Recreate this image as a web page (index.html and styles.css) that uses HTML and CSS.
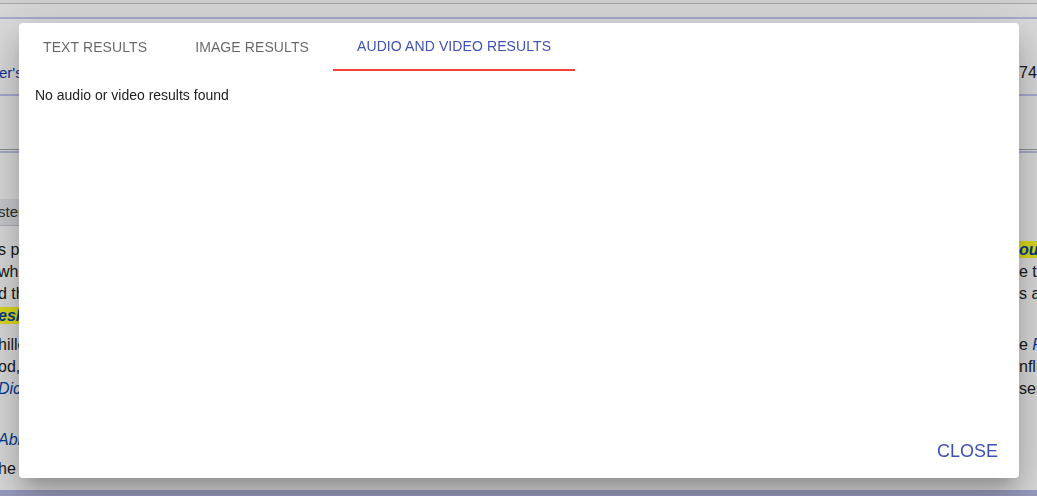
FILE: index.html
```html
<!DOCTYPE html>
<html>
<head>
<meta charset="utf-8">
<link rel="stylesheet" href="styles.css">
</head>
<body>
<div class="page">
  <div class="topstrip"></div>
  <div class="header"></div>
  <div class="row row-title"><span class="left link">er's Digest</span><span class="right">749</span></div>
  <div class="rule-blue rule-a"></div>
  <div class="spacer-a"></div>
  <div class="rule-gray"></div>
  <div class="rule-blue rule-b"></div>
  <div class="spacer-b"></div>
  <div class="greybox">ster</div>
  <div class="para para-a">
    <div class="row"><span class="left">s pr</span><span class="right"><span class="hl">ourn</span></span></div>
    <div class="row"><span class="left">whic</span><span class="right">e the</span></div>
    <div class="row"><span class="left">d th</span><span class="right">s at t</span></div>
    <div class="row"><span class="left"><span class="hl">esh</span></span><span class="right"></span></div>
  </div>
  <div class="para para-b">
    <div class="row"><span class="left">hille</span><span class="right">e <i class="link">Ret</i></span></div>
    <div class="row"><span class="left">od,</span><span class="right">nflu</span></div>
    <div class="row"><span class="left"> <i class="link">Dic</i></span><span class="right">ses</span></div>
  </div>
  <div class="para para-c">
    <div class="row"><span class="left"><i class="link">Abl</i></span><span class="right"></span></div>
  </div>
  <div class="para para-d">
    <div class="row"><span class="left">he y</span><span class="right"></span></div>
  </div>
  <div class="footbar"></div>
</div>
<div class="overlay"></div>
<div class="dialog">
  <div class="tabs">
    <div class="tab">Text results</div>
    <div class="tab">Image results</div>
    <div class="tab tab-active">Audio and video results</div>
  </div>
  <div class="content">No audio or video results found</div>
  <div class="actions">
    <button class="btn">CLOSE</button>
  </div>
</div>
</body>
</html>
```

FILE: styles.css
```css
html, body {
  margin: 0;
  padding: 0;
  height: 100%;
  overflow: hidden;
}
body {
  font-family: "Liberation Sans", Arial, sans-serif;
  font-size: 16px;
  color: #202122;
  background: #fff;
}
.page {
  display: flex;
  flex-direction: column;
  height: 496px;
}
.topstrip {
  height: 3px;
  background: #f4f4f4;
  border-bottom: 1px solid #c4c4c4;
}
.header {
  height: 13px;
  background: #fcfcfc;
  border-bottom: 2px solid #c4c8f0;
}
.row {
  display: flex;
  justify-content: space-between;
  height: 22px;
  line-height: 22px;
  white-space: nowrap;
  margin-right: -42px;
}
.left {
  flex: none;
  width: 60px;
  margin-left: -2px;
  text-align: left;
}
.right {
  flex: none;
  width: 60px;
  overflow: hidden;
}
.row-title {
  margin-top: 42px;
  height: 24px;
  line-height: 24px;
}
.row-title .left {
  font-size: 15px;
  margin-left: -1px;
}
.link {
  color: #0645ad;
}
.rule-a {
  margin-top: 9px;
}
.rule-blue {
  height: 2px;
  background: #c4c8f0;
}
.spacer-a {
  height: 53px;
}
.rule-gray {
  height: 1px;
  background: #a2a9b1;
}
.rule-b {
  margin-top: 1px;
}
.spacer-b {
  height: 46px;
}
.greybox {
  height: 26px;
  line-height: 26px;
  width: 60px;
  margin-left: -2px;
  background: #eaecf0;
  color: #333;
  font-size: 15px;
  border-bottom: 1px solid #c8ccd1;
}
.para-a {
  margin-top: 13px;
}
.para-b {
  margin-top: 7px;
}
.para-c {
  margin-top: 29px;
}
.para-d {
  margin-top: 7px;
}
.hl {
  background: #ffff22;
  font-weight: bold;
  font-style: italic;
  color: #0645ad;
}
.footbar {
  margin-top: auto;
  height: 6px;
  background: #b4b8e0;
}
.overlay {
  position: fixed;
  inset: 0;
  background: rgba(0, 0, 0, 0.15);
}
.dialog {
  position: fixed;
  left: 19px;
  top: 23px;
  width: 1000px;
  height: 455px;
  background: #fff;
  border-radius: 4px;
  box-shadow: 0 11px 15px -7px rgba(0,0,0,0.2), 0 24px 38px 3px rgba(0,0,0,0.14), 0 9px 46px 8px rgba(0,0,0,0.12);
  display: flex;
  flex-direction: column;
  font-family: "Liberation Sans", Arial, sans-serif;
}
.tabs {
  display: flex;
  height: 48px;
}
.tab {
  padding: 0 24px;
  height: 48px;
  line-height: 48px;
  font-size: 14px;
  letter-spacing: 0.1px;
  text-transform: uppercase;
  color: rgba(0, 0, 0, 0.6);
  box-sizing: border-box;
}
.tab-active {
  color: #3f51b5;
  border-bottom: 2px solid #f44336;
  line-height: 46px;
}
.content {
  flex: 1;
  padding: 17px 16px;
  font-size: 14px;
  line-height: 14px;
  color: #222;
}
.actions {
  display: flex;
  justify-content: flex-end;
  padding: 0 13px 10px;
}
.btn {
  font-family: "Liberation Sans", Arial, sans-serif;
  font-size: 18px;
  line-height: 22px;
  padding: 6px 8px;
  border: 0;
  background: transparent;
  color: #3f51b5;
  cursor: pointer;
}
```
